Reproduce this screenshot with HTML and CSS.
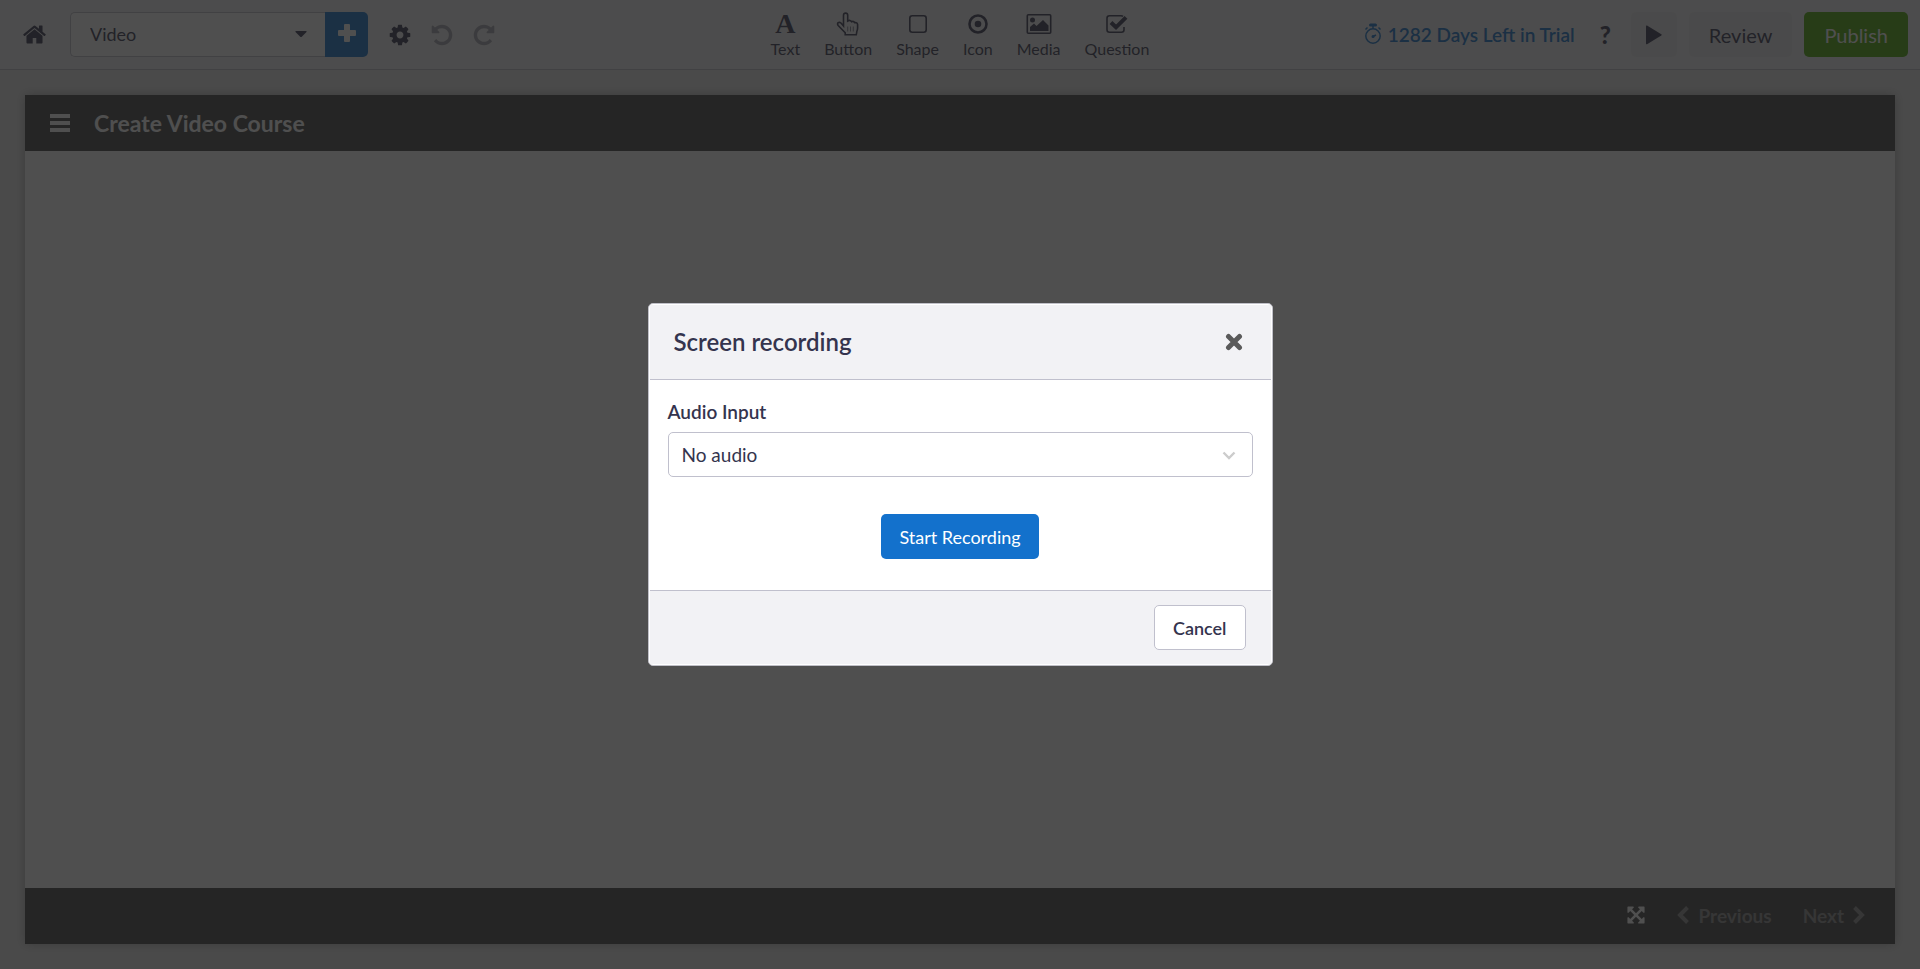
FILE: index.html
```html
<!DOCTYPE html>
<html lang="en">
<head>
  <meta charset="UTF-8" />
  <meta name="viewport" content="width=device-width, initial-scale=1.0"/>
  <title>Create Video Course</title>
  <link rel="stylesheet" href="styles.css">
</head>
<body>

  <header class="toolbar">
    <div class="toolbar-left">
      <a href="#" class="home" aria-label="Home">
        <svg class="icon-home" viewBox="0 0 1792 1792"><path d="M1472 992v480q0 26-19 45t-45 19h-384v-384h-256v384h-384q-26 0-45-19t-19-45v-480q0-1 .5-3t.5-3l575-474 575 474q1 2 1 6zm223-69l-62 74q-8 9-21 11h-3q-13 0-21-7l-692-577-692 577q-12 8-24 7-13-2-21-11l-62-74q-8-10-7-23.5t11-21.5l719-599q32-26 76-26t76 26l244 204v-195q0-14 9-23t23-9h192q14 0 23 9t9 23v408l219 182q10 8 11 21.5t-7 23.5z"/></svg>
      </a>
      <div class="page-picker">
        <select class="page-select" aria-label="Page">
          <option>Video</option>
        </select>
        <svg class="caret" viewBox="0 0 12 6"><path d="M1 0h10q1 0 .5 1L7 5.500q-1 1-2 0L.5 1Q0 0 1 0z"/></svg>
        <button class="add-page" aria-label="Add page">
          <svg viewBox="0 0 20 20"><path d="M8 1h4q1 0 1 1v5h5q1 0 1 1v4q0 1-1 1h-5v5q0 1-1 1H8q-1 0-1-1v-5H2q-1 0-1-1V8q0-1 1-1h5V2q0-1 1-1z"/></svg>
        </button>
      </div>
      <button class="icon-btn" aria-label="Settings">
        <svg viewBox="0 0 1792 1792"><path d="M1152 896q0-106-75-181t-181-75-181 75-75 181 75 181 181 75 181-75 75-181zm512-109v222q0 12-8 23t-20 13l-185 28q-19 54-39 91 35 50 107 138 10 12 10 25t-9 23q-27 37-99 108t-94 71q-12 0-26-9l-138-108q-44 23-91 38-16 136-29 186-7 28-36 28h-222q-14 0-24.500-8.500t-11.500-21.500l-28-184q-49-16-90-37l-141 107q-10 9-25 9-14 0-25-11-126-114-165-168-7-10-7-23 0-12 8-23 15-21 51-66.500t54-70.500q-27-50-41-99l-183-27q-13-2-21-12.500t-8-23.500v-222q0-12 8-23t19-13l186-28q14-46 39-92-40-57-107-138-10-12-10-24 0-10 9-23 26-36 98.500-107.500t94.500-71.500q13 0 26 10l138 107q44-23 91-38 16-136 29-186 7-28 36-28h222q14 0 24.500 8.500t11.500 21.500l28 184q49 16 90 37l142-107q9-9 24-9 13 0 25 10 129 119 165 170 7 8 7 22 0 12-8 23-15 21-51 66.500t-54 70.500q26 50 41 98l183 28q13 2 21 12.500t8 23.500z"/></svg>
      </button>
      <button class="icon-btn faded" aria-label="Undo">
        <svg viewBox="0 0 1792 1792"><path d="M1664 896q0 156-61 298t-164 245-245 164-298 61q-172 0-327-72.500t-264-204.500q-7-10-6.500-22.500t8.500-20.500l137-138q10-9 25-9 16 2 23 12 73 95 179 147t225 52q104 0 198.500-40.500t163.500-109.500 109.500-163.500 40.500-198.500-40.500-198.500-109.500-163.500-163.500-109.500-198.500-40.500q-98 0-188 35.500t-160 101.500l137 138q31 30 14 69-17 40-59 40h-448q-26 0-45-19t-19-45v-448q0-42 40-59 39-17 69 14l130 129q107-101 244.500-156.500t284.500-55.500q156 0 298 61t245 164 164 245 61 298z"/></svg>
      </button>
      <button class="icon-btn faded" aria-label="Redo">
        <svg viewBox="0 0 1792 1792"><path transform="matrix(-1 0 0 1 1792 0)" d="M1664 896q0 156-61 298t-164 245-245 164-298 61q-172 0-327-72.500t-264-204.500q-7-10-6.500-22.500t8.500-20.500l137-138q10-9 25-9 16 2 23 12 73 95 179 147t225 52q104 0 198.500-40.500t163.500-109.500 109.500-163.500 40.500-198.500-40.500-198.500-109.500-163.500-163.500-109.500-198.500-40.500q-98 0-188 35.500t-160 101.500l137 138q31 30 14 69-17 40-59 40h-448q-26 0-45-19t-19-45v-448q0-42 40-59 39-17 69 14l130 129q107-101 244.500-156.500t284.500-55.500q156 0 298 61t245 164 164 245 61 298z"/></svg>
      </button>
    </div>

    <nav class="tools">
      <button class="tool">
        <span class="tool-icon letter">A</span>
        Text
      </button>
      <button class="tool">
        <span class="tool-icon">
          <svg class="line" width="24" height="24" viewBox="0 0 24 24"><path d="M7.500 14V3.200a2.100 2.100 0 0 1 4.200 0V9q2.500-1.500 3.800.7 2.200-.9 3.200 1 2.600-.6 2.900 2V16q0 1.500-.7 3.200l-.6 3.600H9.200v-2L2.200 13.500Q1 11.800 2.200 10.700 3.500 9.800 5 11z"/><path class="thin" d="M11.700 14.500v5M14.500 14.500v5M17.300 14.500v5"/></svg>
        </span>
        Button
      </button>
      <button class="tool">
        <span class="tool-icon">
          <svg class="line" width="20" height="20" viewBox="0 0 20 20"><rect x="1.800" y="1.800" width="16.400" height="16.400" rx="2.500"/></svg>
        </span>
        Shape
      </button>
      <button class="tool">
        <span class="tool-icon">
          <svg width="20" height="20" viewBox="0 0 20 20"><circle class="ring" cx="10" cy="10" r="8.500"/><circle cx="10" cy="10" r="3.300"/></svg>
        </span>
        Icon
      </button>
      <button class="tool">
        <span class="tool-icon">
          <svg width="26" height="20" viewBox="0 0 26 20"><rect class="frame" x="1.300" y=".8" width="23.400" height="18.400" rx="1"/><circle cx="6.500" cy="6" r="2.500"/><path d="M4 17v-4l4-3.500 2.500 2.500L17 6l5.500 5.500V17z"/></svg>
        </span>
        Media
      </button>
      <button class="tool">
        <span class="tool-icon">
          <svg class="line" width="22" height="20" viewBox="0 0 22 20"><path d="M18 13v2.700q0 2.500-2.500 2.500H3.500Q1 18.200 1 15.700V4.300Q1 1.800 3.500 1.800h11.500q1.300 0 2 .6"/><path class="tick" d="M5 8.500l5 4.800L20 3.300"/></svg>
        </span>
        Question
      </button>
    </nav>

    <div class="toolbar-right">
      <a href="#" class="trial">
        <svg width="18" height="22" viewBox="0 0 18 22"><circle cx="9" cy="13" r="7.200"/><path d="M9 2v3.500M1.500 6.500l2-2M16.500 6.500l-2-2M9 13.500l3-1.500"/><path class="knob" d="M6.500 2h5M9 13.500h.1"/></svg>
        1282 Days Left in Trial
      </a>
      <button class="help" aria-label="Help">?</button>
      <button class="btn btn-grey btn-play" aria-label="Preview">
        <svg width="16" height="20" viewBox="0 0 16 20"><path d="M0 1.200q0-1 1-.6l14.300 8.600q.9.600 0 1.200L1 19.200q-1 .5-1-.6z"/></svg>
      </button>
      <button class="btn btn-grey">Review</button>
      <button class="btn btn-green">Publish</button>
    </div>
  </header>

  <main class="workspace">
    <section class="stage">
      <div class="stage-header">
        <button class="menu-btn" aria-label="Menu">
          <svg width="20" height="18" viewBox="0 0 20 18"><path d="M0 0h20v4H0zM0 7h20v4H0zM0 14h20v4H0z"/></svg>
        </button>
        <h1>Create Video Course</h1>
      </div>
      <div class="stage-body"></div>
      <div class="stage-footer">
        <button class="fullscreen" aria-label="Full screen">
          <svg viewBox="0 0 1792 1792"><path d="M1283 413l-355 355 355 355 144-144q29-31 70-14 39 17 39 59v448q0 26-19 45t-45 19h-448q-42 0-59-40-17-39 14-69l144-144-355-355-355 355 144 144q31 30 14 69-17 40-59 40h-448q-26 0-45-19t-19-45v-448q0-42 40-59 39-17 69 14l144 144 355-355-355-355-144 144q-19 19-45 19-12 0-24-5-40-17-40-59v-448q0-26 19-45t45-19h448q42 0 59 40 17 39-14 69l-144 144 355 355 355-355-144-144q-31-30-14-69 17-40 59-40h448q26 0 45 19t19 45v448q0 42-39 59-13 5-25 5-26 0-45-19z" transform="translate(128 128)"/></svg>
        </button>
        <button class="step">
          <svg width="12" height="18" viewBox="0 0 12 18"><path d="M10.500 1.500L3 9l7.500 7.500"/></svg>
          Previous
        </button>
        <button class="step">
          Next
          <svg width="12" height="18" viewBox="0 0 12 18"><path d="M1.500 1.500L9 9l-7.500 7.500"/></svg>
        </button>
      </div>
    </section>
  </main>

  <div class="overlay">
    <div class="modal" role="dialog" aria-labelledby="modal-title">
      <div class="modal-header">
        <h2 id="modal-title">Screen recording</h2>
        <button class="close" aria-label="Close">
          <svg width="18" height="18" viewBox="0 0 18 18"><path d="M3.500 3.500l11 11M14.500 3.500l-11 11"/></svg>
        </button>
      </div>
      <div class="modal-body">
        <label for="audio-input">Audio Input</label>
        <div class="select-wrap">
          <select id="audio-input">
            <option>No audio</option>
          </select>
          <svg class="chevron" viewBox="0 0 14 9"><path d="M1.500 1.500L7 7l5.500-5.500"/></svg>
        </div>
        <button class="btn btn-blue">Start Recording</button>
      </div>
      <div class="modal-footer">
        <button class="btn btn-white">Cancel</button>
      </div>
    </div>
  </div>

</body>
</html>
```
FILE: styles.css
```css
* {
  box-sizing: border-box;
}

body {
  margin: 0;
  height: 100vh;
  display: flex;
  flex-direction: column;
  background-color: #e9e9e9;
  color: #34344e;
  font-family: Lato, sans-serif;
  font-size: 18px;
  overflow: hidden;
}

h1,
h2 {
  margin: 0;
}

button,
select {
  margin: 0;
  padding: 0;
  border: none;
  background: none;
  color: inherit;
  font: inherit;
  cursor: pointer;
}

select {
  appearance: none;
}

a {
  color: inherit;
  text-decoration: none;
}

svg {
  display: block;
  fill: currentColor;
}

/* Toolbar */
.toolbar {
  display: grid;
  grid-template-columns: 1fr auto 1fr;
  align-items: center;
  height: 70px;
  padding: 0 12px;
  background-color: #f2f2f3;
  border-bottom: 1px solid #c0c0c8;
}

.toolbar-left,
.toolbar-right {
  display: flex;
  align-items: center;
}

.toolbar-left {
  padding-left: 10px;
}

.toolbar-right {
  justify-content: flex-end;
  gap: 12px;
}

.icon-home {
  width: 25px;
  height: 25px;
}

.page-picker {
  position: relative;
  display: flex;
  width: 298px;
  height: 45px;
  margin: 0 20px 0 23px;
}

.page-select {
  flex: 1;
  padding: 0 19px 2px;
  background-color: #fff;
  border: 1px solid #c0c0c8;
  border-right: none;
  border-radius: 5px 0 0 5px;
}

.caret {
  position: absolute;
  top: 19px;
  right: 61px;
  width: 12px;
  height: 6px;
  pointer-events: none;
}

.add-page {
  display: flex;
  align-items: center;
  justify-content: center;
  width: 43px;
  padding-bottom: 3px;
  background-color: #1371cc;
  border-radius: 0 5px 5px 0;
  color: #fff;
}

.add-page svg {
  width: 20px;
  height: 20px;
}

.icon-btn {
  margin-right: 18px;
}

.icon-btn svg {
  width: 24px;
  height: 24px;
}

.faded {
  opacity: 0.4;
}

/* Insert tools */
.tools {
  display: flex;
  gap: 24px;
}

.tool {
  display: flex;
  flex-direction: column;
  align-items: center;
  font-size: 16px;
  line-height: 22px;
}

.tool-icon {
  display: flex;
  align-items: center;
  height: 28px;
}

.letter {
  font: bold 28px/28px "Liberation Serif", serif;
}

.line {
  fill: none;
  stroke: currentColor;
  stroke-width: 1.6;
}

.thin {
  stroke-width: 0.6;
}

.ring {
  fill: none;
  stroke: currentColor;
  stroke-width: 2.6;
}

.frame {
  fill: none;
  stroke: currentColor;
  stroke-width: 1.6;
}

.tick {
  stroke-width: 4;
}

/* Right side */
.trial {
  display: flex;
  align-items: center;
  gap: 6px;
  margin-right: 13px;
  padding-bottom: 1px;
  color: #1371cc;
  font-size: 19px;
  font-weight: 600;
}

.trial svg {
  fill: none;
  stroke: currentColor;
  stroke-width: 1.5;
}

.trial .knob {
  stroke-width: 3;
  stroke-linecap: round;
}

.help {
  margin-right: 8px;
  font-size: 24px;
  font-weight: 900;
}

.btn {
  display: flex;
  align-items: center;
  justify-content: center;
  height: 45px;
  padding: 0 18px;
  border-radius: 5px;
}

.btn-grey,
.btn-green {
  padding: 0 20px;
  font-size: 20px;
}

.btn-grey {
  background-color: #e9e9eb;
}

.btn-play {
  width: 46px;
  padding: 0;
}

.btn-green {
  background-color: #49a800;
  color: #fff;
}

/* Course preview */
.workspace {
  flex: 1;
  display: flex;
  padding: 25px;
}

.stage {
  flex: 1;
  display: flex;
  flex-direction: column;
  background-color: #fff;
  box-shadow: 0 0 10px rgba(0, 0, 0, 0.3);
}

.stage-header,
.stage-footer {
  display: flex;
  align-items: center;
  height: 56px;
  background-color: #404040;
  color: #fff;
}

.stage-header {
  gap: 24px;
  padding: 0 25px;
}

.stage-header h1 {
  font-size: 23px;
  font-weight: 700;
}

.stage-body {
  flex: 1;
}

.stage-footer {
  justify-content: flex-end;
  gap: 31px;
  padding: 0 30px 2px;
}

.fullscreen svg {
  width: 20px;
  height: 20px;
}

.step {
  display: flex;
  align-items: center;
  gap: 9px;
  font-size: 19px;
  font-weight: 700;
  opacity: 0.4;
}

.step svg {
  fill: none;
  stroke: currentColor;
  stroke-width: 4;
}

/* Modal */
.overlay {
  position: fixed;
  inset: 0;
  display: flex;
  align-items: center;
  justify-content: center;
  background-color: rgba(30, 30, 30, 0.78);
}

.modal {
  width: 625px;
  max-width: 100%;
  padding: 1px;
  background-color: #fff;
  border: 1px solid #c0c0c8;
  border-radius: 5px;
}

.modal-header,
.modal-footer {
  display: flex;
  align-items: center;
  background-color: #f2f2f5;
}

.modal-header {
  justify-content: space-between;
  height: 75px;
  padding: 0 28px 1px 24px;
  border-bottom: 1px solid #c0c0cd;
}

.modal-header h2 {
  font-size: 24px;
  font-weight: 600;
}

.close {
  color: #5a5a5a;
}

.close svg {
  stroke: currentColor;
  stroke-width: 5;
  stroke-linecap: round;
}

.modal-body {
  display: flex;
  flex-direction: column;
  padding: 20px 18px 31px;
}

.modal-body label {
  margin-bottom: 8px;
  font-size: 19px;
  font-weight: 600;
  line-height: 24px;
}

.select-wrap {
  position: relative;
  margin-bottom: 37px;
}

.select-wrap select {
  width: 100%;
  height: 45px;
  padding: 0 13px 1px;
  background-color: #fff;
  border: 1px solid #c0c0cd;
  border-radius: 5px;
  font-size: 19px;
}

.chevron {
  position: absolute;
  top: 19px;
  right: 17px;
  width: 14px;
  height: 9px;
  fill: none;
  stroke: #ccc;
  stroke-width: 2.4;
  pointer-events: none;
}

.btn-blue {
  align-self: center;
  background-color: #1371cc;
  color: #fff;
}

.modal-footer {
  justify-content: flex-end;
  height: 74px;
  padding: 0 25px;
  border-top: 1px solid #c0c0cd;
}

.btn-white {
  background-color: #fff;
  border: 1px solid #c0c0cd;
  font-weight: 600;
}
```
